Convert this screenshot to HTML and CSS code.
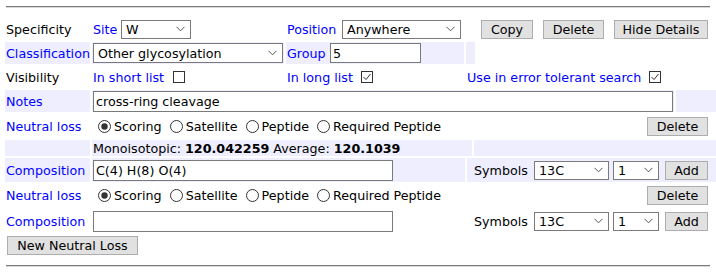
FILE: index.html
```html
<!DOCTYPE html>
<html>
<head>
<meta charset="utf-8">
<link rel="stylesheet" href="styles.css">
</head>
<body>
<hr class="rule rule-top">
<div class="form">
  <div class="row main r1">
    <div class="cell"><span class="dark">Specificity</span></div>
    <div class="cell"><span class="blue w-site">Site</span><select class="sel sel-site"><option>W</option></select></div>
    <div class="cell"><span class="blue w-pos">Position</span><select class="sel sel-pos"><option>Anywhere</option></select></div>
    <div class="cell"></div>
    <div class="cell btns"><button class="btn b-copy">Copy</button><button class="btn b-del">Delete</button><button class="btn b-hide">Hide Details</button></div>
  </div>
  <div class="row main r2">
    <div class="cell bg"><span class="blue">Classification</span></div>
    <div class="cell bg"><select class="sel sel-class"><option>Other glycosylation</option></select></div>
    <div class="cell bg"><span class="blue w-group">Group</span><input class="txt in-group" type="text" value="5"></div>
    <div class="cell bg"></div>
    <div class="cell"></div>
  </div>
  <div class="row main r3">
    <div class="cell"><span class="dark">Visibility</span></div>
    <div class="cell"><span class="blue w-short">In short list</span><svg class="chk" width="12" height="12" viewBox="0 0 12 12"><rect x="0.5" y="0.5" width="11" height="11" fill="#fff" stroke="#333"/></svg></div>
    <div class="cell"><span class="blue w-long">In long list</span><svg class="chk" width="12" height="12" viewBox="0 0 12 12"><rect x="0.5" y="0.5" width="11" height="11" fill="#fff" stroke="#333"/><polyline points="2.5,6 5,8.5 9.5,3" fill="none" stroke="#333" stroke-width="1"/></svg></div>
    <div class="cell span2"><span class="blue w-err">Use in error tolerant search</span><svg class="chk" width="12" height="12" viewBox="0 0 12 12"><rect x="0.5" y="0.5" width="11" height="11" fill="#fff" stroke="#333"/><polyline points="2.5,6 5,8.5 9.5,3" fill="none" stroke="#333" stroke-width="1"/></svg></div>
  </div>
  <div class="row notes">
    <div class="cell bg"><span class="blue">Notes</span></div>
    <div class="cell bg"><input class="txt in-notes" type="text" value="cross-ring cleavage"></div>
    <div class="cell bg"></div>
  </div>

  <div class="row loss r5">
    <div class="cell"><span class="blue">Neutral loss</span></div>
    <div class="cell radios">
      <div class="opts">
        <span class="opt"><svg class="rad" width="13" height="13" viewBox="0 0 13 13"><circle cx="6.5" cy="6.5" r="6" fill="#fff" stroke="#333"/><circle cx="6.5" cy="6.5" r="3.2" fill="#333"/></svg>Scoring</span>
        <span class="opt"><svg class="rad" width="13" height="13" viewBox="0 0 13 13"><circle cx="6.5" cy="6.5" r="6" fill="#fff" stroke="#333"/></svg>Satellite</span>
        <span class="opt"><svg class="rad" width="13" height="13" viewBox="0 0 13 13"><circle cx="6.5" cy="6.5" r="6" fill="#fff" stroke="#333"/></svg>Peptide</span>
        <span class="opt"><svg class="rad" width="13" height="13" viewBox="0 0 13 13"><circle cx="6.5" cy="6.5" r="6" fill="#fff" stroke="#333"/></svg>Required Peptide</span>
      </div>
      <button class="btn b-del">Delete</button>
    </div>
  </div>
  <div class="row mass r6">
    <div class="cell bg"></div>
    <div class="cell bg"><span class="dark">Monoisotopic: <b>120.042259</b> Average: <b>120.1039</b></span></div>
    <div class="cell bg"></div>
  </div>
  <div class="row comp r7">
    <div class="cell bg"><span class="blue">Composition</span></div>
    <div class="cell bg"><input class="txt in-comp" type="text" value="C(4) H(8) O(4)"></div>
    <div class="cell bg sym"><span class="dark w-sym">Symbols</span><select class="sel sel-iso"><option>13C</option></select><select class="sel sel-num"><option>1</option></select><button class="btn b-add">Add</button></div>
  </div>

  <div class="row loss r8">
    <div class="cell"><span class="blue">Neutral loss</span></div>
    <div class="cell radios">
      <div class="opts">
        <span class="opt"><svg class="rad" width="13" height="13" viewBox="0 0 13 13"><circle cx="6.5" cy="6.5" r="6" fill="#fff" stroke="#333"/><circle cx="6.5" cy="6.5" r="3.2" fill="#333"/></svg>Scoring</span>
        <span class="opt"><svg class="rad" width="13" height="13" viewBox="0 0 13 13"><circle cx="6.5" cy="6.5" r="6" fill="#fff" stroke="#333"/></svg>Satellite</span>
        <span class="opt"><svg class="rad" width="13" height="13" viewBox="0 0 13 13"><circle cx="6.5" cy="6.5" r="6" fill="#fff" stroke="#333"/></svg>Peptide</span>
        <span class="opt"><svg class="rad" width="13" height="13" viewBox="0 0 13 13"><circle cx="6.5" cy="6.5" r="6" fill="#fff" stroke="#333"/></svg>Required Peptide</span>
      </div>
      <button class="btn b-del">Delete</button>
    </div>
  </div>
  <div class="row comp r9">
    <div class="cell"><span class="blue">Composition</span></div>
    <div class="cell"><input class="txt in-comp" type="text" value=""></div>
    <div class="cell sym"><span class="dark w-sym">Symbols</span><select class="sel sel-iso"><option>13C</option></select><select class="sel sel-num"><option>1</option></select><button class="btn b-add">Add</button></div>
  </div>
  <div class="row r10">
    <button class="btn b-new">New Neutral Loss</button>
  </div>
</div>
<hr class="rule rule-bottom">
</body>
</html>
```

FILE: styles.css
```css
html, body {
  margin: 0;
  padding: 0;
  background: #fff;
}
body {
  padding: 6px 6px 0 6px;
  font-family: "DejaVu Sans", Verdana, sans-serif;
  font-size: 12.7px;
  color: #000;
}
.rule {
  margin: 0;
  height: 0;
  border: 0;
  border-top: 1px solid #7a7a7a;
  border-bottom: 1px solid #d8d8d8;
}
.rule-bottom {
  margin-top: 9px;
}
.form {
  margin: 10px 0 0 -1px;
  width: 711px;
  display: flex;
  flex-direction: column;
  row-gap: 2px;
}
.row {
  display: grid;
  column-gap: 2px;
}
.main {
  grid-template-columns: 85px 192px 178px 9px 239px;
  height: 22px;
}
.notes {
  grid-template-columns: 85px 582px 40px;
  height: 22px;
}
.loss {
  grid-template-columns: 85px 624px;
  height: 24px;
}
.r8 { height: 23px; }
.mass {
  grid-template-columns: 85px 380px 242px;
  height: 16px;
}
.comp {
  grid-template-columns: 85px 373px 249px;
  height: 24px;
}
.r10 {
  display: flex;
  align-items: center;
  height: 21px;
  padding-left: 2px;
}
.cell {
  display: flex;
  align-items: center;
  padding: 0 1px;
  white-space: nowrap;
  min-width: 0;
}
.span2 { grid-column: span 2; }
.bg { background: #eeeeff; }
.blue { color: #0000ff; }
.dark { color: #000; }
b { font-weight: bold; }

.w-site { width: 28px; }
.w-pos { width: 55px; }
.w-group { width: 43px; }
.w-short { width: 80px; }
.w-long { width: 74px; }
.w-err { width: 182px; }
.w-sym { width: 60px; }

.sel {
  -webkit-appearance: none;
  appearance: none;
  box-sizing: border-box;
  height: 19px;
  margin: 0;
  padding: 0 0 0 4px;
  border: 1px solid #7a7a7a;
  border-radius: 0;
  background-color: #fff;
  background-image: url("data:image/svg+xml;utf8,<svg xmlns='http://www.w3.org/2000/svg' width='9' height='6' viewBox='0 0 9 6'><path d='M0.5 0.8 L4.5 4.8 L8.5 0.8' fill='none' stroke='%23555' stroke-width='1'/></svg>");
  background-repeat: no-repeat;
  background-position: right 5px center;
  font-family: "DejaVu Sans", Verdana, sans-serif;
  font-size: 12.7px;
  color: #000;
}
.sel-site { width: 70px; }
.sel-pos { width: 119px; }
.sel-class { width: 190px; height: 20px; }
.sel-iso { width: 75px; }
.sel-num { width: 46px; margin-left: 4px; }

.txt {
  box-sizing: border-box;
  height: 21px;
  margin: 0;
  padding: 0 2px;
  border: 1px solid #7a7a7a;
  border-radius: 0;
  background: #fff;
  font-family: "DejaVu Sans", Verdana, sans-serif;
  font-size: 12.7px;
  color: #000;
  outline: none;
}
.in-group { width: 91px; height: 20px; }
.in-notes { width: 580px; }
.in-comp { width: 300px; }

.btn {
  box-sizing: border-box;
  height: 19px;
  margin: 0;
  padding: 0;
  border: 1px solid #adadad;
  border-radius: 0;
  background: #e1e1e1;
  font-family: "DejaVu Sans", Verdana, sans-serif;
  font-size: 12.7px;
  color: #000;
}
.btns {
  padding-left: 4px;
  column-gap: 10px;
}
.b-copy { width: 52px; }
.b-del { width: 61px; }
.b-hide { width: 94px; }
.b-add { width: 43px; margin-left: 6px; }
.b-new { width: 131px; }

.chk { display: block; flex: none; }

.radios {
  justify-content: space-between;
  padding-right: 8px;
}
.opts {
  display: flex;
  align-items: center;
}
.opt {
  display: flex;
  align-items: center;
  margin-right: 3px;
}
.rad {
  display: block;
  flex: none;
  margin: 0 3px 0 5px;
}
.sym { padding-left: 7px; }
```
